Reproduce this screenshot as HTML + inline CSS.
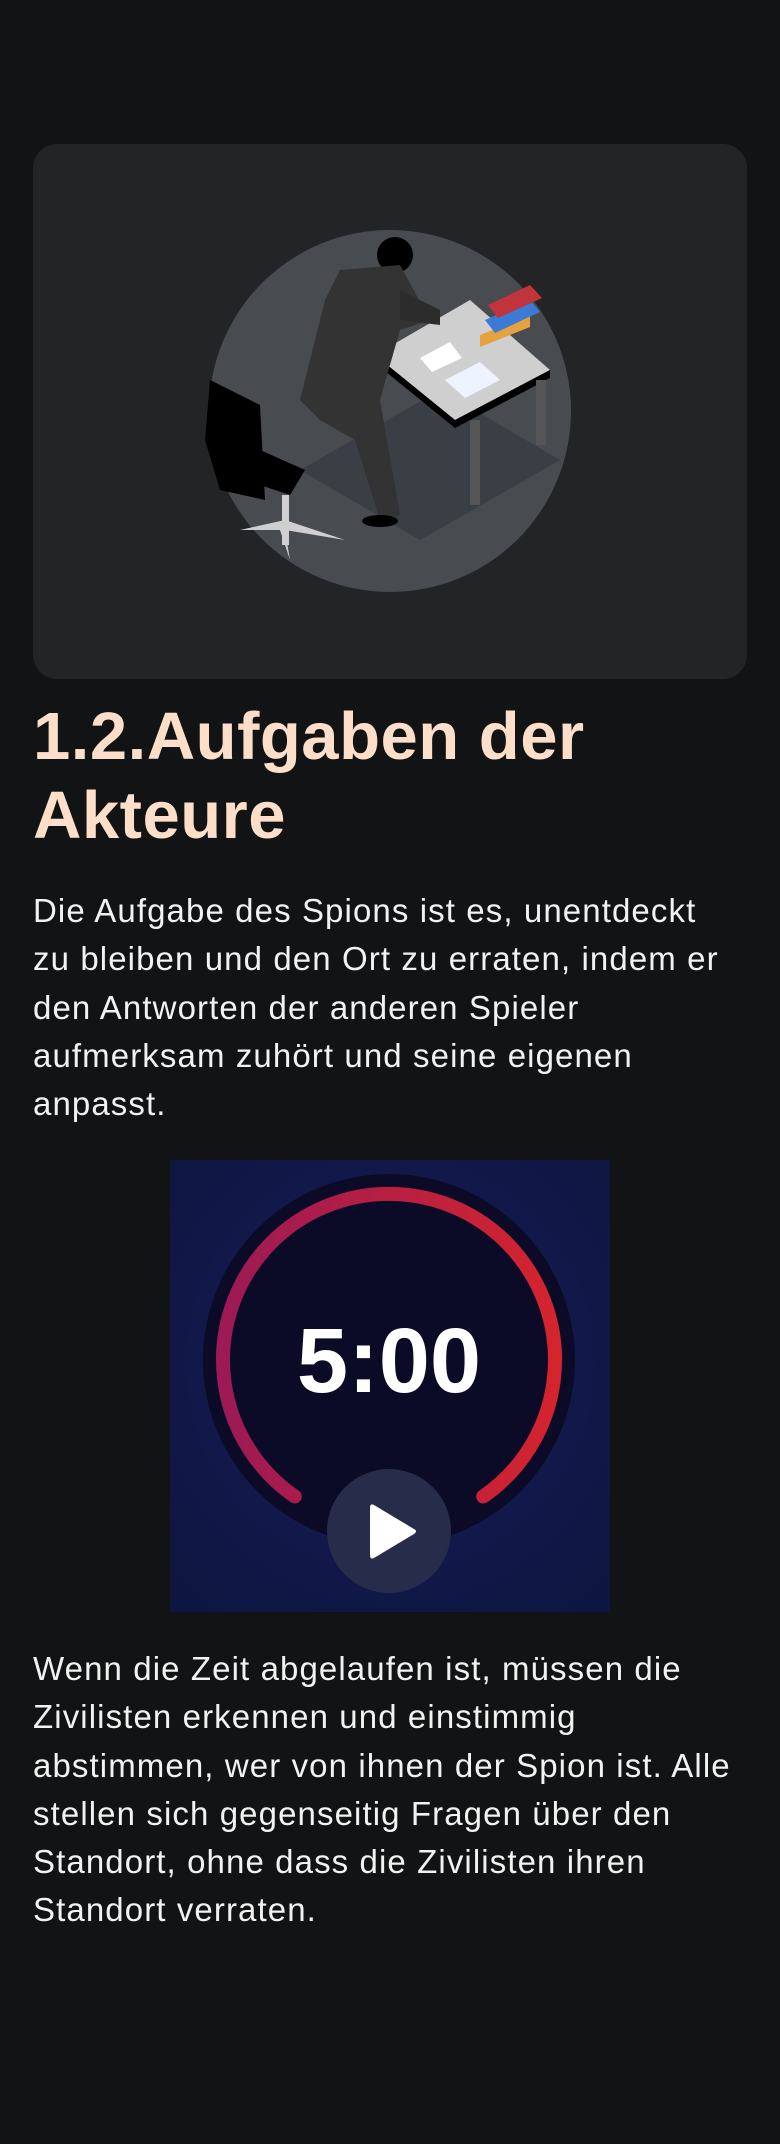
<!DOCTYPE html>
<html><head><meta charset="utf-8"><style>
html,body{margin:0;padding:0;background:#121314;}
body{width:780px;height:2144px;position:relative;overflow:hidden;font-family:"Liberation Sans",sans-serif;}
.card{position:absolute;left:33px;top:144px;width:714px;height:535px;background:#232426;border-radius:24px;}
h1{position:absolute;left:33px;top:697px;margin:0;font-size:67px;line-height:79px;font-weight:700;color:#fddfc9;width:740px;letter-spacing:0.5px;}
.p{position:absolute;left:33px;margin:0;font-size:33px;line-height:48.3px;color:#f2f2f2;width:712px;letter-spacing:1.1px;}
</style></head><body>
<div class="card"></div>
<svg style="position:absolute;left:0;top:0" width="780" height="700">
<circle cx="390" cy="411" r="181" fill="#484b4f"/>
<polygon points="300,470 440,390 560,460 420,540" fill="#3a3f46"/>
<polygon points="375,355 470,300 550,370 455,420" fill="#cfcfcf"/>
<polygon points="375,355 455,420 455,428 375,363" fill="#000"/>
<polygon points="455,420 550,370 550,378 455,428" fill="#000"/>
<rect x="470" y="420" width="10" height="85" fill="#555"/>
<rect x="536" y="380" width="10" height="65" fill="#555"/>
<polygon points="420,358 450,342 462,358 432,372" fill="#fff"/>
<polygon points="445,380 480,362 500,380 465,398" fill="#eef4ff"/>
<polygon points="480,335 530,315 530,327 480,347" fill="#e6a23c"/>
<polygon points="485,320 530,300 540,312 495,333" fill="#3b7bd6"/>
<polygon points="488,305 530,285 542,298 498,318" fill="#c0343c"/>
<circle cx="395" cy="255" r="18" fill="#000"/>
<polygon points="340,270 400,265 430,320 400,330 380,400 400,515 380,520 355,440 320,420 300,400 325,300" fill="#333"/>
<polygon points="400,290 440,310 440,325 400,320" fill="#2c2c2c"/>
<ellipse cx="380" cy="521" rx="18" ry="6" fill="#000"/>
<polygon points="210,380 260,405 265,500 220,490 205,440" fill="#000"/>
<polygon points="260,450 305,470 290,495 245,480" fill="#000"/>
<rect x="282" y="495" width="7" height="50" fill="#cfcfcf"/>
<polygon points="240,530 285,520 345,540 285,530 290,560 280,530" fill="#cfcfcf"/>
</svg>
<h1>1.2.Aufgaben der Akteure</h1>
<p class="p" style="top:887px">Die Aufgabe des Spions ist es, unentdeckt<br>zu bleiben und den Ort zu erraten, indem er den Antworten der anderen Spieler aufmerksam zuhört und seine eigenen anpasst.</p>
<svg style="position:absolute;left:170px;top:1160px" width="440" height="452">
<defs>
<radialGradient id="bg" cx="50%" cy="45%" r="70%"><stop offset="0" stop-color="#1a1f5a"/><stop offset="1" stop-color="#0d1540"/></radialGradient>
<linearGradient id="ar" x1="0" y1="0" x2="1" y2="0"><stop offset="0" stop-color="#9c1a55"/><stop offset="1" stop-color="#d4242e"/></linearGradient>
</defs>
<rect width="440" height="452" fill="url(#bg)"/>
<circle cx="219" cy="200" r="186" fill="#0b0b27"/>
<path d="M124.8 336.5 A166 166 0 1 1 313.2 336.5" fill="none" stroke="url(#ar)" stroke-width="14" stroke-linecap="round"/>
<text x="219" y="232" text-anchor="middle" font-family="Liberation Sans,sans-serif" font-weight="700" font-size="92" fill="#fff">5:00</text>
<circle cx="219" cy="371" r="62" fill="#262c4a"/>
<path d="M204 345 L244 369 Q248 371 244 374 L204 398 Q200 400 200 395 L200 348 Q200 343 204 345Z" fill="#fff"/>
</svg>
<p class="p" style="top:1645px">Wenn die Zeit abgelaufen ist, müssen die Zivilisten erkennen und einstimmig abstimmen, wer von ihnen der Spion ist. Alle stellen sich gegenseitig Fragen über den Standort, ohne dass die Zivilisten ihren Standort verraten.</p>
</body></html>
